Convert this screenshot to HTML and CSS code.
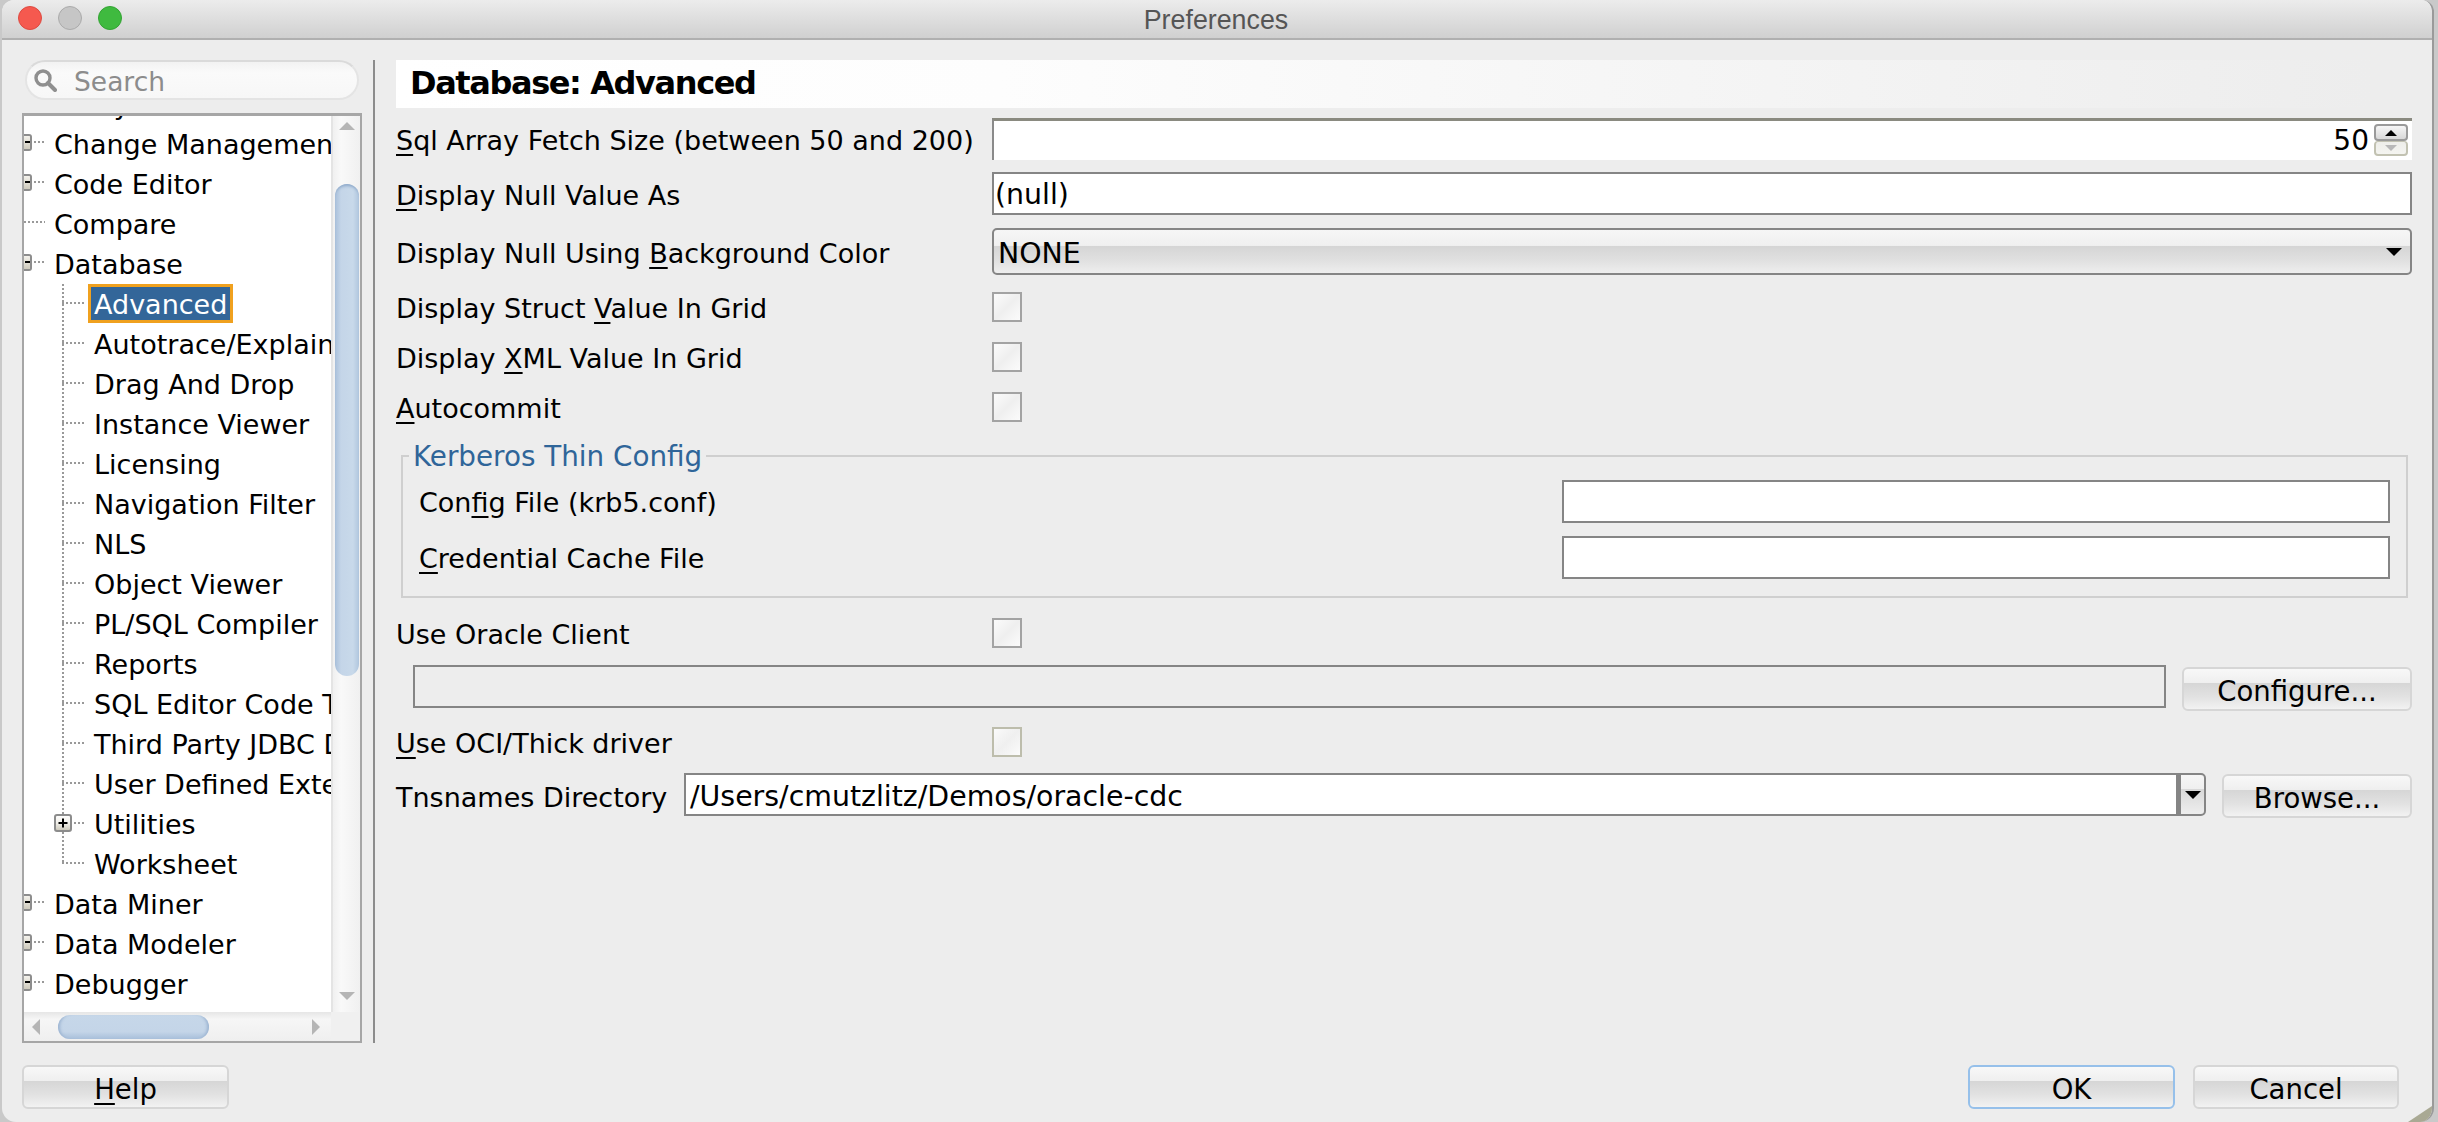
FILE: index.html
```html
<!DOCTYPE html>
<html lang="en">
<head>
<meta charset="utf-8">
<title>Preferences</title>
<link rel="stylesheet" href="styles.css">
</head>
<body>
<div class="window">
  <header class="titlebar">
    <div class="lights">
      <span class="light red"></span>
      <span class="light grey"></span>
      <span class="light green"></span>
    </div>
    <div class="title">Preferences</div>
  </header>

  <div class="main">
    <aside class="left">
      <div class="search">
        <svg class="search-icon" width="24" height="24" viewBox="0 0 24 24"><circle cx="10" cy="10" r="7" fill="none" stroke="#8f8f8f" stroke-width="3.4"/><path d="M15 15l7 7" stroke="#8f8f8f" stroke-width="4" stroke-linecap="round"/></svg>
        <span>Search</span>
      </div>
      <div class="tree">
        <div class="tree-view">
          <div class="rows">
            <div class="row"><span class="exp"><i></i></span><span class="dots"></span><span class="txt">Analytics</span></div>
            <div class="row"><span class="exp"><i></i></span><span class="dots"></span><span class="txt">Change Management</span></div>
            <div class="row"><span class="exp"><i></i></span><span class="dots"></span><span class="txt">Code Editor</span></div>
            <div class="row"><span class="dots long"></span><span class="txt">Compare</span></div>
            <div class="row"><span class="exp"><i></i></span><span class="dots"></span><span class="txt">Database</span></div>
            <div class="row sub"><span class="stem"></span><span class="txt selected">Advanced</span></div>
            <div class="row sub"><span class="stem"></span><span class="txt">Autotrace/Explain Plan</span></div>
            <div class="row sub"><span class="stem"></span><span class="txt">Drag And Drop</span></div>
            <div class="row sub"><span class="stem"></span><span class="txt">Instance Viewer</span></div>
            <div class="row sub"><span class="stem"></span><span class="txt">Licensing</span></div>
            <div class="row sub"><span class="stem"></span><span class="txt">Navigation Filter</span></div>
            <div class="row sub"><span class="stem"></span><span class="txt">NLS</span></div>
            <div class="row sub"><span class="stem"></span><span class="txt">Object Viewer</span></div>
            <div class="row sub"><span class="stem"></span><span class="txt">PL/SQL Compiler</span></div>
            <div class="row sub"><span class="stem"></span><span class="txt">Reports</span></div>
            <div class="row sub"><span class="stem"></span><span class="txt">SQL Editor Code Templates</span></div>
            <div class="row sub"><span class="stem"></span><span class="txt">Third Party JDBC Drivers</span></div>
            <div class="row sub"><span class="stem"></span><span class="txt">User Defined Extensions</span></div>
            <div class="row sub"><span class="stem"><svg class="plus" width="18" height="18" viewBox="0 0 18 18"><defs><linearGradient id="pg" x1="0" y1="0" x2="0" y2="1"><stop offset="0" stop-color="#fff"/><stop offset="0.5" stop-color="#f2f0ea"/><stop offset="1" stop-color="#c9c5b6"/></linearGradient></defs><rect x="1" y="1" width="16" height="16" rx="2" fill="url(#pg)" stroke="#8c8c8c" stroke-width="2"/><path d="M9 4.5v9M4.5 9h9" stroke="#000" stroke-width="2"/></svg></span><span class="txt">Utilities</span></div>
            <div class="row sub"><span class="stem last"></span><span class="txt">Worksheet</span></div>
            <div class="row"><span class="exp"><i></i></span><span class="dots"></span><span class="txt">Data Miner</span></div>
            <div class="row"><span class="exp"><i></i></span><span class="dots"></span><span class="txt">Data Modeler</span></div>
            <div class="row"><span class="exp"><i></i></span><span class="dots"></span><span class="txt">Debugger</span></div>
          </div>
        </div>
        <div class="vscroll">
          <span class="arrow up"></span>
          <span class="vthumb"></span>
          <span class="arrow down"></span>
        </div>
        <div class="hscroll">
          <span class="arrow left"></span>
          <span class="hthumb"></span>
          <span class="arrow right"></span>
        </div>
        <div class="corner"></div>
      </div>
    </aside>

    <div class="divider"></div>

    <section class="panel">
      <h1 class="heading">Database: Advanced</h1>

      <div class="frow r-sql">
        <label class="lab"><u>S</u>ql Array Fetch Size (between 50 and 200)</label>
        <div class="spin-field">
          <span class="spin-val">50</span>
          <span class="spinner">
            <span class="spin-btn on"><i></i></span>
            <span class="spin-btn off"><i></i></span>
          </span>
        </div>
      </div>

      <div class="frow r-null">
        <label class="lab"><u>D</u>isplay Null Value As</label>
        <div class="input grow">(null)</div>
      </div>

      <div class="frow r-combo">
        <label class="lab">Display Null Using <u>B</u>ackground Color</label>
        <div class="combo">NONE<span class="caret"></span></div>
      </div>

      <div class="frow r-check first">
        <label class="lab">Display Struct <u>V</u>alue In Grid</label>
        <span class="check"></span>
      </div>
      <div class="frow r-check">
        <label class="lab">Display <u>X</u>ML Value In Grid</label>
        <span class="check"></span>
      </div>
      <div class="frow r-check">
        <label class="lab"><u>A</u>utocommit</label>
        <span class="check"></span>
      </div>

      <fieldset class="group">
        <legend>Kerberos Thin Config</legend>
        <div class="grow-row one">
          <label class="glab">Con<u>f</u>ig File (krb5.conf)</label>
          <div class="input ginput"></div>
        </div>
        <div class="grow-row two">
          <label class="glab"><u>C</u>redential Cache File</label>
          <div class="input ginput"></div>
        </div>
      </fieldset>

      <div class="frow r-check oracle">
        <label class="lab">Use Oracle Client</label>
        <span class="check"></span>
      </div>

      <div class="client-row">
        <div class="input disabled"></div>
        <button class="btn configure">Configure...</button>
      </div>

      <div class="frow r-check oci">
        <label class="lab"><u>U</u>se OCI/Thick driver</label>
        <span class="check dim"></span>
      </div>

      <div class="tns-row">
        <label class="lab tns-lab">Tnsnames Directory</label>
        <div class="input tns-input">/Users/cmutzlitz/Demos/oracle-cdc</div>
        <span class="tns-drop"><span class="caret"></span></span>
        <button class="btn browse">Browse...</button>
      </div>
    </section>
  </div>

  <footer class="footer">
    <button class="btn help"><u>H</u>elp</button>
    <div class="actions">
      <button class="btn ok">OK</button>
      <button class="btn cancel">Cancel</button>
    </div>
  </footer>

  <svg class="grip" width="30" height="16" viewBox="0 0 30 16"><path d="M6 16L30 0v16z" fill="#a9a994"/></svg>
</div>
</body>
</html>
```

FILE: styles.css
```css
* { box-sizing: border-box; }

html, body {
  margin: 0;
  height: 100%;
}

body {
  width: 2438px;
  height: 1122px;
  overflow: hidden;
  background: #c9c9c9;
  padding-left: 2px;
  font-family: "DejaVu Sans", sans-serif;
  font-size: 27px;
  color: #000;
}

.window {
  position: relative;
  width: 2432px;
  height: 1122px;
  background: #ededed;
  border-radius: 12px 12px 14px 14px;
  border-right: 2px solid #9a9a9a;
  overflow: hidden;
  display: flex;
  flex-direction: column;
}

u { text-underline-offset: 4px; text-decoration-thickness: 2px; }

/* title bar */
.titlebar {
  position: relative;
  flex: none;
  height: 40px;
  display: flex;
  align-items: center;
  justify-content: center;
  background: linear-gradient(#ececec, #d0d0d0);
  border-bottom: 2px solid #b0b0b0;
}

.title {
  font-family: "Liberation Sans", sans-serif;
  font-size: 26.8px;
  color: #555;
  margin-right: 2px;
  margin-top: 2px;
}

.lights {
  position: absolute;
  left: 16px;
  top: 6px;
  display: flex;
  gap: 16px;
}

.light {
  width: 24px;
  height: 24px;
  border-radius: 50%;
}
.red { background: #f5594f; border: 1px solid #dd4a40; }
.grey { background: #c6c6c6; border: 1px solid #aaa; }
.green { background: #3fba3f; border: 1px solid #33a333; }

/* main */
.main {
  flex: none;
  height: 1003px;
  display: flex;
  padding: 20px 0 0 20px;
}

.left {
  flex: none;
  width: 340px;
  display: flex;
  flex-direction: column;
}

.search {
  height: 40px;
  margin: 0 3px 13px;
  border-radius: 20px;
  border: 2px solid #e4e4e4;
  border-top-color: #dadada;
  background: linear-gradient(#f2f2f2, #fafafa 30%, #f7f7f7);
  display: flex;
  align-items: center;
  padding-left: 6px;
  color: #8c8c8c;
  font-size: 26.5px;
}

.search span { padding-top: 3px; }

.search-icon { margin-right: 17px; }

.tree {
  height: 930px;
  border: 2px solid #a6a6a6;
  border-top-width: 3px;
  background: #fff;
  display: grid;
  grid-template-columns: 307px 1fr;
  grid-template-rows: 896px 1fr;
}

.tree-view {
  overflow: hidden;
}

.rows { margin-top: -32px; }

.row {
  height: 40px;
  display: flex;
  align-items: center;
  white-space: nowrap;
}

.txt { line-height: 36px; padding-top: 2px; }

.exp {
  flex: none;
  width: 8px;
  height: 17px;
  margin-top: -4px;
  border: 2px solid #8d8d8d;
  border-left: 0;
  border-radius: 0 3px 3px 0;
  background: linear-gradient(#f4f2ec, #cfcbbd);
  display: flex;
  align-items: center;
}

.exp i {
  width: 5px;
  height: 2px;
  background: #000;
  margin-left: 1px;
}

.dots {
  flex: none;
  width: 11px;
  height: 2px;
  margin: -4px 9px 0 2px;
  background: repeating-linear-gradient(90deg, #999 0 2px, transparent 2px 4px);
}

.dots.long {
  width: 21px;
  margin-left: 0;
}

.sub .stem {
  flex: none;
  align-self: stretch;
  width: 24px;
  margin-left: 38px;
  display: flex;
  align-items: center;
  background:
    repeating-linear-gradient(90deg, #999 0 2px, transparent 2px 4px) left 18px / 100% 2px no-repeat,
    repeating-linear-gradient(#999 0 2px, transparent 2px 4px) left top / 2px 100% no-repeat;
}

.sub .stem.last {
  background:
    repeating-linear-gradient(90deg, #999 0 2px, transparent 2px 4px) left 18px / 100% 2px no-repeat,
    repeating-linear-gradient(#999 0 2px, transparent 2px 4px) left top / 2px 20px no-repeat;
}

.plus {
  flex: none;
  margin-left: -8px;
  margin-top: -2px;
}

.sub .txt { margin-left: 8px; }

.sub .txt.selected {
  margin-left: 2px;
  padding: 0 3px;
  height: 39px;
  line-height: 35px;
  margin-top: -2px;
  background: #336699;
  border: 3px solid #f0a11f;
  color: #fff;
}

/* scrollbars */
.vscroll {
  background: linear-gradient(90deg, #f0f0f0, #f9f9f9 30%, #f0f0f0);
  border-left: 2px solid #e4e4e4;
  display: flex;
  flex-direction: column;
  align-items: center;
}

.hscroll {
  background: linear-gradient(#e6e6e6, #f6f6f6 25%, #efefef);
  display: flex;
  align-items: center;
  padding-left: 8px;
}

.corner { background: #f0f0f0; }

.arrow {
  flex: none;
  width: 0;
  height: 0;
  border-style: solid;
  border-color: transparent;
}

.arrow.up {
  margin-top: 6px;
  border-width: 0 8px 8px;
  border-bottom-color: #b5b5b5;
}

.arrow.down {
  margin-top: auto;
  margin-bottom: 12px;
  border-width: 8px 8px 0;
  border-top-color: #b5b5b5;
}

.arrow.left {
  border-width: 8px 8px 8px 0;
  border-right-color: #b5b5b5;
}

.arrow.right {
  margin-left: 103px;
  border-width: 8px 0 8px 8px;
  border-left-color: #b5b5b5;
}

.vthumb {
  flex: none;
  width: 24px;
  height: 492px;
  margin-top: 54px;
  border-radius: 12px;
  background: linear-gradient(90deg, #a8bfda, #c4d5e8 25%, #c8d9ea 75%, #b0c6de);
  box-shadow: inset 0 4px 3px -2px #8ea9ca;
}

.hthumb {
  flex: none;
  width: 151px;
  height: 24px;
  margin-left: 18px;
  border-radius: 12px;
  background: linear-gradient(#c6d7e9, #c4d5e8 70%, #a8bfda);
  box-shadow: inset 4px 0 3px -2px #9db5d2, inset -4px 0 3px -2px #9db5d2;
}

/* divider */
.divider {
  flex: none;
  width: 2px;
  height: 983px;
  margin-left: 11px;
  background: #8c8c8c;
}

/* right panel */
.panel {
  flex: none;
  width: 2020px;
  margin-left: 17px;
  display: flex;
  flex-direction: column;
}

.heading {
  flex: none;
  margin: 0 0 0 4px;
  height: 48px;
  padding-left: 14px;
  font-size: 32px;
  letter-spacing: -1.4px;
  line-height: 47px;
  font-weight: bold;
  background: linear-gradient(90deg, #fff, #fdfdfd 30%, #ededed 98%);
}

.frow {
  flex: none;
  display: flex;
  align-items: center;
}

.lab {
  flex: none;
  width: 600px;
  padding-left: 4px;
  padding-top: 3px;
  white-space: nowrap;
}

.glab { padding-top: 2px; }

.r-sql { height: 42px; margin-top: 10px; }
.r-null { height: 43px; margin-top: 12px; }
.r-combo { height: 47px; margin-top: 13px; }
.r-check { height: 30px; margin-top: 20px; }
.r-check.first { margin-top: 17px; }
.r-check.oracle { margin-top: 20px; }
.r-check.oci { margin-top: 17px; }

.spin-field {
  flex: 1;
  height: 42px;
  background: #fff;
  border-top: 3px solid #8a8a80;
  border-left: 2px solid #8a8a8a;
  display: flex;
  align-items: center;
  justify-content: flex-end;
  padding-right: 4px;
  border-bottom: 0;
  font-size: 28px;
}

.spin-val { margin-right: 5px; }

.spinner {
  display: flex;
  flex-direction: column;
  margin-top: -2px;
}

.spin-btn {
  width: 34px;
  display: flex;
  justify-content: center;
  border-radius: 4px;
}

.spin-btn i {
  width: 0;
  height: 0;
  border-style: solid;
  border-color: transparent;
  border-width: 0 6px 6px;
}

.spin-btn.on {
  height: 17px;
  padding-top: 4px;
  border: 2px solid #9a9a9a;
  background: linear-gradient(#f6f6f6, #d8d8d8);
}
.spin-btn.on i { border-bottom-color: #000; }

.spin-btn.off {
  height: 15px;
  padding-top: 3px;
  border: 2px solid #c2c2b2;
  border-top-width: 1px;
  background: linear-gradient(#eeeeea, #f4f4f0);
}
.spin-btn.off i {
  border-width: 6px 6px 0;
  border-top-color: #b8b8b8;
}

.input {
  background: #fff;
  border: 2px solid #858585;
  height: 43px;
  display: flex;
  align-items: center;
  padding: 2px 0 0 1px;
  white-space: nowrap;
  font-size: 28.4px;
}

.input.grow { flex: 1; }

.combo {
  flex: 1;
  height: 47px;
  border: 2px solid #858585;
  border-radius: 5px;
  padding: 3px 8px 0 4px;
  display: flex;
  align-items: center;
  justify-content: space-between;
  font-size: 28.4px;
  background: linear-gradient(#f6f6f6, #f0f0f0 36%, #d5d5d5 37%, #e0e0e0 70%, #eeeeee);
}

.caret {
  flex: none;
  width: 0;
  height: 0;
  border-style: solid;
  border-color: #000 transparent transparent;
  border-width: 8px 8px 0;
}

.combo .caret { margin-top: -3px; }

.check {
  flex: none;
  width: 30px;
  height: 30px;
  border: 2px solid #a3a3a3;
  background: linear-gradient(135deg, #fbfbfb, #efefef 50%, #fbfbfb);
}

.check.dim { border-color: #bdbdac; }

/* kerberos group */
.group {
  flex: none;
  min-width: 0;
  margin: 14px 4px 0 9px;
  padding: 0 16px 17px 16px;
  border: 2px solid #cfcfcf;
}

.group legend {
  padding: 0 4px;
  margin-left: -10px;
  height: 40px;
  line-height: 42px;
  color: #2f6599;
  font-size: 27.8px;
}

.grow-row {
  display: flex;
  align-items: center;
  justify-content: space-between;
}

.grow-row.one { margin-top: 4px; }
.grow-row.two { margin-top: 13px; }

.glab { white-space: nowrap; }

.input.ginput {
  flex: none;
  width: 828px;
}

/* client row */
.client-row {
  flex: none;
  display: flex;
  margin-top: 17px;
  margin-left: 21px;
  height: 45px;
}

.input.disabled {
  flex: none;
  width: 1753px;
  background: #ededed;
}

.btn {
  font: inherit;
  font-size: 27.5px;
  color: #000;
  padding: 4px 0 0;
  height: 44px;
  border: 2px solid #d6d6d6;
  border-radius: 6px;
  background: linear-gradient(#f8f8f8, #efefef 34%, #d6d6d6 36%, #e2e2e2 70%, #f2f2f2);
  line-height: 34px;
  white-space: nowrap;
}

.btn.configure {
  flex: none;
  width: 230px;
  margin: 2px 0 0 16px;
}

/* tns row */
.tns-row {
  flex: none;
  display: flex;
  align-items: flex-start;
  margin-top: 16px;
}

.lab.tns-lab {
  width: 292px;
  line-height: 44px;
}

.input.tns-input {
  flex: none;
  width: 1494px;
  padding: 3px 0 0 4px;
}

.tns-drop {
  flex: none;
  width: 28px;
  height: 43px;
  border: 2px solid #858585;
  border-left-width: 3px;
  border-radius: 0 5px 5px 0;
  background: linear-gradient(#f6f6f6, #efefef 36%, #d8d8d8 37%, #eeeeee);
  display: flex;
  align-items: center;
  justify-content: center;
}

.btn.browse {
  flex: none;
  width: 190px;
  margin: 1px 0 0 16px;
}

/* footer */
.footer {
  flex: 1;
  display: flex;
  justify-content: space-between;
  align-items: flex-start;
  padding: 22px 33px 0 20px;
}

.actions {
  display: flex;
  gap: 18px;
}

.btn.help { width: 207px; }
.btn.ok { width: 207px; border-color: #96c0ea; }
.btn.cancel { width: 206px; }

.grip {
  position: absolute;
  right: 0;
  bottom: 0;
}
```
